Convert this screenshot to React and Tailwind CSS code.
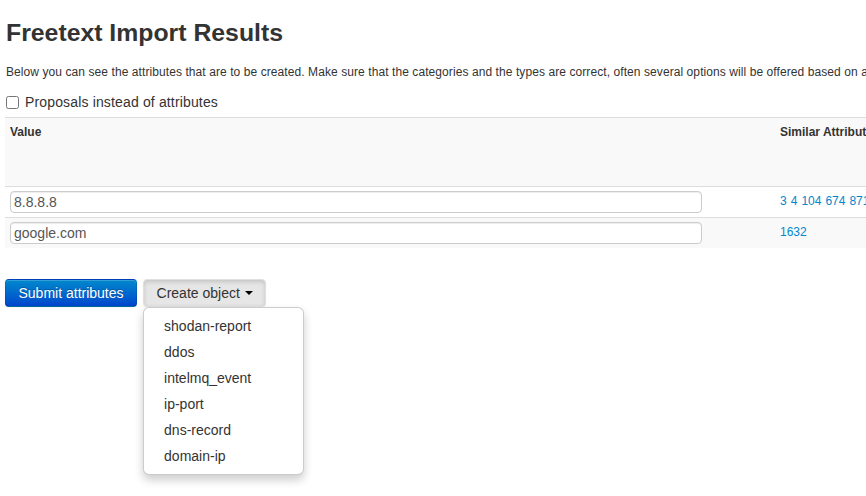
import { useState } from "react";

const objects = ["shodan-report", "ddos", "intelmq_event", "ip-port", "dns-record", "domain-ip"];

const rows = [
    { value: "8.8.8.8", similar: ["3", "4", "104", "674", "871"], striped: false },
    { value: "google.com", similar: ["1632"], striped: true },
];

const App = () => {
    const [proposals, setProposals] = useState(false);

    return (
        <div className="w-full h-[496px] overflow-hidden bg-white text-[#333] font-['Liberation_Sans',Arial,sans-serif]">
            <div className="pl-[5px] pt-[18px]">
                <h2 className="text-[24.8px] leading-[30px] font-bold pl-[1px]">Freetext Import Results</h2>

                <p className="mt-[14px] text-[12px] leading-[20px] tracking-[0.08px] whitespace-nowrap pl-[1px]">
                    Below you can see the attributes that are to be created. Make sure that the categories and the types are correct, often several options will be offered based on an inconclusive pattern-match.
                </p>

                <label className="mt-[10px] flex items-center gap-[6px] text-[14px] leading-[20px] tracking-[0.15px] pl-[1px]">
                    <input
                        type="checkbox"
                        checked={proposals}
                        onChange={(e) => setProposals(e.target.checked)}
                        className="m-0 w-[13px] h-[13px]"
                    />
                    Proposals instead of attributes
                </label>

                {/* results table, wider than the window like the original */}
                <div className="mt-[5px] w-[1200px] text-[12px] leading-[20px]">
                    <div className="flex border-t border-[#ddd] bg-[#f9f9f9] h-[69px] font-bold">
                        <div className="w-[770px] px-[5px] py-[4px]">Value</div>
                        <div className="flex-1 px-[5px] py-[4px] whitespace-nowrap">Similar Attributes</div>
                    </div>
                    {rows.map((row) => (
                        <div key={row.value} className={`flex border-t border-[#ddd] ${row.striped ? "bg-[#f9f9f9]" : "bg-white"}`}>
                            <div className="w-[770px] px-[5px] py-[4px]">
                                <input
                                    type="text"
                                    defaultValue={row.value}
                                    className="block w-[692px] h-[22px] px-[3px] text-[14px] text-[#555] bg-white border border-[#ccc] rounded-[4px] shadow-[inset_0_1px_1px_rgba(0,0,0,0.075)] outline-none"
                                />
                            </div>
                            <div className="flex-1 px-[5px] py-[4px] flex gap-[4px] whitespace-nowrap">
                                {row.similar.map((id) => (
                                    <a key={id} href="#" className="text-[#0088cc]">{id}</a>
                                ))}
                            </div>
                        </div>
                    ))}
                </div>

                <div className="mt-[31px] flex items-start gap-[6px] text-[14px] leading-[20px]">
                    <button className="h-[28px] px-[12.5px] border border-[rgba(0,0,0,0.1)] border-b-[rgba(0,0,0,0.25)] rounded-[4px] text-white bg-gradient-to-b from-[#0088cc] to-[#0044cc] [text-shadow:0_-1px_0_rgba(0,0,0,0.25)] shadow-[inset_0_1px_0_rgba(255,255,255,0.2),0_1px_2px_rgba(0,0,0,0.05)]">
                        Submit attributes
                    </button>
                    <div className="relative">
                        <button className="h-[28px] px-[12.5px] flex items-center border border-[#e0e0e0] rounded-[4px] bg-[#e6e6e6] text-[#333] shadow-[inset_0_2px_4px_rgba(0,0,0,0.15),0_1px_2px_rgba(0,0,0,0.05)]">
                            Create object
                            <span className="ml-[5px] w-0 h-0 border-t-[4px] border-t-black border-x-[4px] border-x-transparent" />
                        </button>
                        <ul className="absolute left-0 top-[28px] w-[161px] py-[5px] bg-white border border-[rgba(0,0,0,0.2)] rounded-[6px] shadow-[0_5px_10px_rgba(0,0,0,0.2)] z-10">
                            {objects.map((name) => (
                                <li key={name}>
                                    <a href="#" className="block px-[20px] py-[3px] text-[#333] whitespace-nowrap">{name}</a>
                                </li>
                            ))}
                        </ul>
                    </div>
                </div>
            </div>
        </div>
    );
};

export default App;
